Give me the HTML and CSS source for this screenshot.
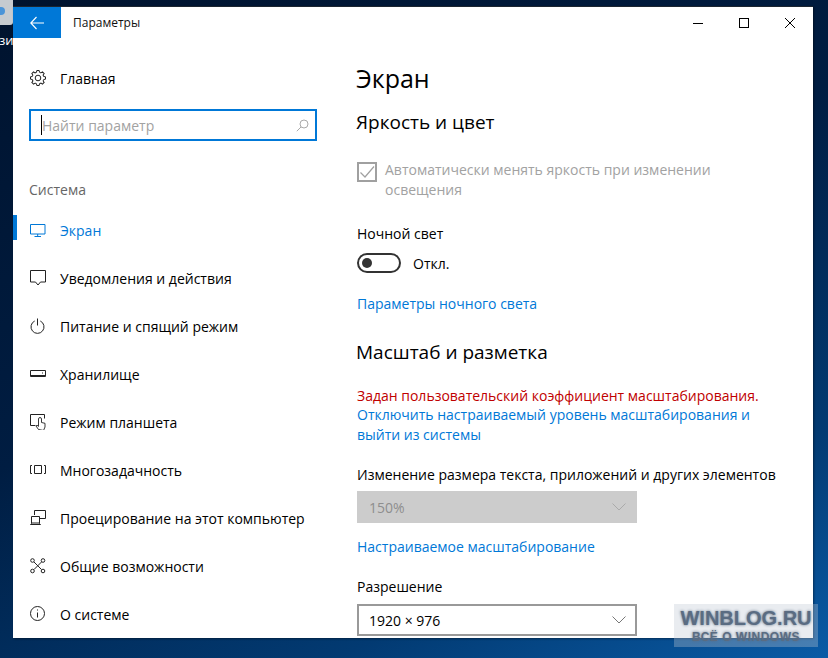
FILE: index.html
```html
<!DOCTYPE html>
<html lang="ru">
<head>
<meta charset="utf-8">
<title>Параметры</title>
<link rel="stylesheet" href="styles.css">
</head>
<body>
<div class="desk-icon"><div class="desk-pic"><i class="desk-dot"></i></div><div class="desk-label">зи</div></div>
<div class="window">
  <header class="titlebar">
    <div class="back"><svg width="14" height="14" viewBox="0 0 14 14"><path d="M6.500 1 L.8 7 L6.500 13 M1 7 H14" fill="none" stroke="#fff" stroke-width="1.100"/></svg></div>
    <div class="title">Параметры</div>
    <div class="winbtns">
      <svg class="wb" width="46" height="32" viewBox="0 0 46 32"><path d="M18 16.500 H28" stroke="#000"/></svg>
      <svg class="wb" width="46" height="32" viewBox="0 0 46 32"><rect x="18.500" y="11.500" width="9" height="9" fill="none" stroke="#000"/></svg>
      <svg class="wb" width="46" height="32" viewBox="0 0 46 32"><path d="M18 11 L28 21 M28 11 L18 21" stroke="#000" fill="none"/></svg>
    </div>
  </header>
  <div class="body">
    <aside class="side">
      <div class="nav-row home">
        <svg class="ico" width="16" height="16" viewBox="0 0 16 16"><defs><path id="tooth" d="M6.500 2.300 L6.800 .5 H9.200 L9.500 2.300 L10.970 2.910" fill="none" stroke="#222"/></defs><use href="#tooth"/><use href="#tooth" transform="rotate(45 8 8)"/><use href="#tooth" transform="rotate(90 8 8)"/><use href="#tooth" transform="rotate(135 8 8)"/><use href="#tooth" transform="rotate(180 8 8)"/><use href="#tooth" transform="rotate(225 8 8)"/><use href="#tooth" transform="rotate(270 8 8)"/><use href="#tooth" transform="rotate(315 8 8)"/><circle cx="8" cy="8" r="2.800" fill="none" stroke="#222"/></svg>
        <span>Главная</span>
      </div>
      <div class="search">
        <i class="caret"></i><span class="ph">Найти параметр</span>
        <svg class="mag" width="13" height="13" viewBox="0 0 13 13"><circle cx="8" cy="5" r="4" fill="none" stroke="#aaa"/><path d="M5 8 L.8 12.200" stroke="#aaa" fill="none"/></svg>
      </div>
      <div class="group">Система</div>
      <nav class="nav">
        <div class="nav-row active">
          <svg class="ico" width="16" height="16" viewBox="0 0 16 16"><path d="M.5 2.500h14.500v9.500H.5z M4.500 14.500h6.500 M7.700 12v2.500" fill="none" stroke="#0078d7"/></svg>
          <span>Экран</span>
        </div>
        <div class="nav-row">
          <svg class="ico" width="16" height="16" viewBox="0 0 16 16"><path d="M.5 .5h15v11.500h-5l-2.500 3-2.500-3h-5z" fill="none" stroke="#222"/></svg>
          <span>Уведомления и действия</span>
        </div>
        <div class="nav-row">
          <svg class="ico" width="16" height="16" viewBox="0 0 16 16"><path d="M4.700 3A6.500 6.500 0 1 0 10.300 3 M7.500 .5v7" fill="none" stroke="#222"/></svg>
          <span>Питание и спящий режим</span>
        </div>
        <div class="nav-row">
          <svg class="ico" width="16" height="16" viewBox="0 0 16 16"><path d="M.5 4.500h15v6H.5z" fill="none" stroke="#222"/><path d="M.5 9.500h15" stroke="#222"/><path d="M12 6.500h1v1h-1z" fill="#222"/></svg>
          <span>Хранилище</span>
        </div>
        <div class="nav-row">
          <svg class="ico" width="16" height="16" viewBox="0 0 16 16"><path d="M5.500 11.500H.5V.5h14v4" fill="none" stroke="#222"/><path d="M8.500 15.500l-2.500-3.500 1-.8 1.500 1.200V5q.1-1.500 1.500-1.500T11.500 5v3.500l3.500.8v3.700l-1.500 3.500z" fill="#fff" stroke="#222" stroke-width=".9"/></svg>
          <span>Режим планшета</span>
        </div>
        <div class="nav-row">
          <svg class="ico" width="16" height="16" viewBox="0 0 16 16"><path d="M4.500 3.500h7v8h-7z M2 3.500H.5v8H2 M14 3.500h1.500v8H14" fill="none" stroke="#222"/></svg>
          <span>Многозадачность</span>
        </div>
        <div class="nav-row">
          <svg class="ico" width="16" height="16" viewBox="0 0 16 16"><path d="M4.500 5V.5h11v8H10 M.5 14.500l1-1v-7h8v7l1 1z M1.500 13h8" fill="none" stroke="#222"/></svg>
          <span>Проецирование на этот компьютер</span>
        </div>
        <div class="nav-row">
          <svg class="ico" width="16" height="16" viewBox="0 0 16 16"><g fill="none" stroke="#222"><circle cx="2.500" cy="2.500" r="1.800"/><circle cx="13" cy="2.500" r="1.800"/><circle cx="2.500" cy="13" r="1.800"/><circle cx="13" cy="13" r="1.800"/><path d="M4 4l7.500 7.500 M11.500 4L4 11.500"/></g></svg>
          <span>Общие возможности</span>
        </div>
        <div class="nav-row">
          <svg class="ico" width="16" height="16" viewBox="0 0 16 16"><circle cx="7.500" cy="7.500" r="7" fill="none" stroke="#222"/><path d="M7.500 6.500v5" stroke="#222"/><path d="M7 3.500h1v1H7z" fill="#222"/></svg>
          <span>О системе</span>
        </div>
      </nav>
    </aside>
    <main class="content">
      <h1 class="h1">Экран</h1>
      <h2 class="h2 first">Яркость и цвет</h2>
      <div class="check-row">
        <svg class="check" width="20" height="20" viewBox="0 0 20 20"><rect x="1" y="1" width="18" height="18" fill="none" stroke="#a0a0a0" stroke-width="2"/><path d="M3.500 10.500l4.500 4.500 9-10.500" fill="none" stroke="#a0a0a0" stroke-width="1.200"/></svg>
        <div class="check-text">Автоматически менять яркость при изменении освещения</div>
      </div>
      <div class="label night">Ночной свет</div>
      <div class="toggle-row"><div class="toggle"><i class="knob"></i></div><span>Откл.</span></div>
      <a class="link night-link">Параметры ночного света</a>
      <h2 class="h2 scale">Масштаб и разметка</h2>
      <div class="warn">Задан пользовательский коэффициент масштабирования.</div>
      <a class="link wrap">Отключить настраиваемый уровень масштабирования и выйти из системы</a>
      <div class="label resize">Изменение размера текста, приложений и других элементов</div>
      <div class="select disabled"><span>150%</span><svg width="14" height="8" viewBox="0 0 14 8"><path d="M.5 .5L7 7 13.500 .5" fill="none" stroke="#aaa"/></svg></div>
      <a class="link custom">Настраиваемое масштабирование</a>
      <div class="label res">Разрешение</div>
      <div class="select"><span>1920 × 976</span><svg width="14" height="8" viewBox="0 0 14 8"><path d="M.5 .5L7 7 13.500 .5" fill="none" stroke="#777"/></svg></div>
    </main>
  </div>
</div>
<div class="mark"><div class="mark-a">WINBLOG.RU</div><div class="mark-b">ВСЁ О WINDOWS</div></div>
</body>
</html>
```
FILE: styles.css
```css
* { box-sizing: border-box; }
html, body { margin: 0; height: 100%; }
body {
  position: relative;
  width: 828px;
  height: 658px;
  overflow: hidden;
  font-family: "Open Sans", "Noto Sans", sans-serif;
  font-size: 14px;
  color: #000;
  background: linear-gradient(155deg, #00132e 0%, #001d42 45%, #023a72 78%, #0a5ba6 100%);
}
.desk-icon { position: absolute; left: 0; top: 0; width: 13px; height: 48px; overflow: hidden; }
.desk-pic { width: 13px; height: 25px; background: #c6cbd0; border-radius: 0 0 3px 0; position: relative; }
.desk-dot { position: absolute; left: -3px; top: 7px; width: 8px; height: 8px; border-radius: 50%; background: #4a94d8; }
.desk-label { color: #fff; font-size: 13px; margin-top: 7px; margin-left: -1px; line-height: 16px; }
.window {
  position: absolute;
  left: 13px;
  top: 6px;
  width: 800px;
  height: 632px;
  background: #fff;
  border-top: 1px solid #1c2530;
  box-shadow: 1px 1px 2px rgba(0,0,0,.4);
  overflow: hidden;
  display: flex;
  flex-direction: column;
}
.titlebar { display: flex; height: 31px; align-items: center; flex: none; }
.back { width: 48px; height: 31px; background: #0078d7; display: flex; align-items: center; justify-content: center; }
.title { margin-left: 12px; font-size: 12px; color: #111; flex: 1; }
.winbtns { display: flex; }
.wb { display: block; }
.body { display: flex; flex: 1; min-height: 0; }
.side { width: 330px; flex: none; position: relative; }
.nav-row { display: flex; align-items: center; height: 48px; padding-left: 17px; font-size: 14px; color: #000; }
.nav-row .ico { flex: none; margin-right: 14px; }
.home { margin-top: 16px; height: 48px; }
.search {
  margin: 7px 0 0 16px;
  width: 288px;
  height: 32px;
  border: 2px solid #0078d7;
  display: flex;
  align-items: center;
  padding: 0 6px 0 10px;
  color: #a2a2a2;
  position: relative;
}
.caret { width: 1px; height: 20px; background: #000; position: absolute; left: 10px; top: 4px; }
.ph { flex: 1; font-size: 14px; margin-left: 1px; }
.group { margin: 39px 0 0 16px; color: #666; font-size: 14px; line-height: 20px; }
.nav { margin-top: 6px; }
.active { color: #0078d7; position: relative; }
.active::before { content: ""; position: absolute; left: 0; top: 9px; width: 4px; height: 25px; background: #0078d7; }
.content { flex: 1; padding: 0 0 0 14px; min-width: 0; }
.h1 { margin: 24px 0 0 -1px; font-size: 25px; font-weight: 400; line-height: 32px; }
.h2 { font-size: 19px; font-weight: 400; line-height: 26px; margin: 0 0 0 -1px; }
.h2.first { margin-top: 15px; }
.check-row { display: flex; margin-top: 25px; }
.check { flex: none; margin-right: 8px; margin-top: 2px; }
.check-text { width: 370px; color: #a2a2a2; line-height: 20px; font-size: 14px; }
.label { line-height: 20px; font-size: 14px; }
.night { margin-top: 24px; }
.toggle-row { display: flex; align-items: center; margin-top: 9px; font-size: 14px; }
.toggle { width: 44px; height: 20px; border: 2px solid #333; border-radius: 10px; margin-right: 12px; padding: 3px; }
.knob { display: block; width: 10px; height: 10px; border-radius: 50%; background: #333; }
.link { display: block; color: #0078d7; line-height: 20px; font-size: 14px; }
.night-link { margin-top: 21px; }
.h2.scale { margin-top: 25px; }
.warn { color: #c00000; margin-top: 21px; line-height: 20px; font-size: 14px; }
.wrap { width: 410px; margin-top: -1px; }
.resize { margin-top: 20px; }
.select {
  margin-top: 7px;
  width: 280px;
  height: 32px;
  border: 2px solid #999;
  display: flex;
  align-items: center;
  justify-content: space-between;
  padding: 0 9px 0 10px;
  font-size: 14px;
}
.disabled { background: #ccc; border-color: #ccc; color: #8e8e8e; margin-top: 6px; }
.custom { margin-top: 14px; }
.res { margin-top: 20px; }
.mark {
  position: absolute;
  left: 674px;
  top: 604px;
  width: 144px;
  height: 43px;
  background: rgba(190,198,210,.34);
  text-align: center;
  font-family: "Liberation Sans", sans-serif;
  font-weight: 700;
  color: #5a6c82;
  text-shadow: 0 0 3px #5a6c82;
}
.mark-a { font-size: 20px; line-height: 22px; margin-top: 3px; }
.mark-b { font-size: 12px; line-height: 14px; margin-top: 1px; letter-spacing: .5px; }
```
